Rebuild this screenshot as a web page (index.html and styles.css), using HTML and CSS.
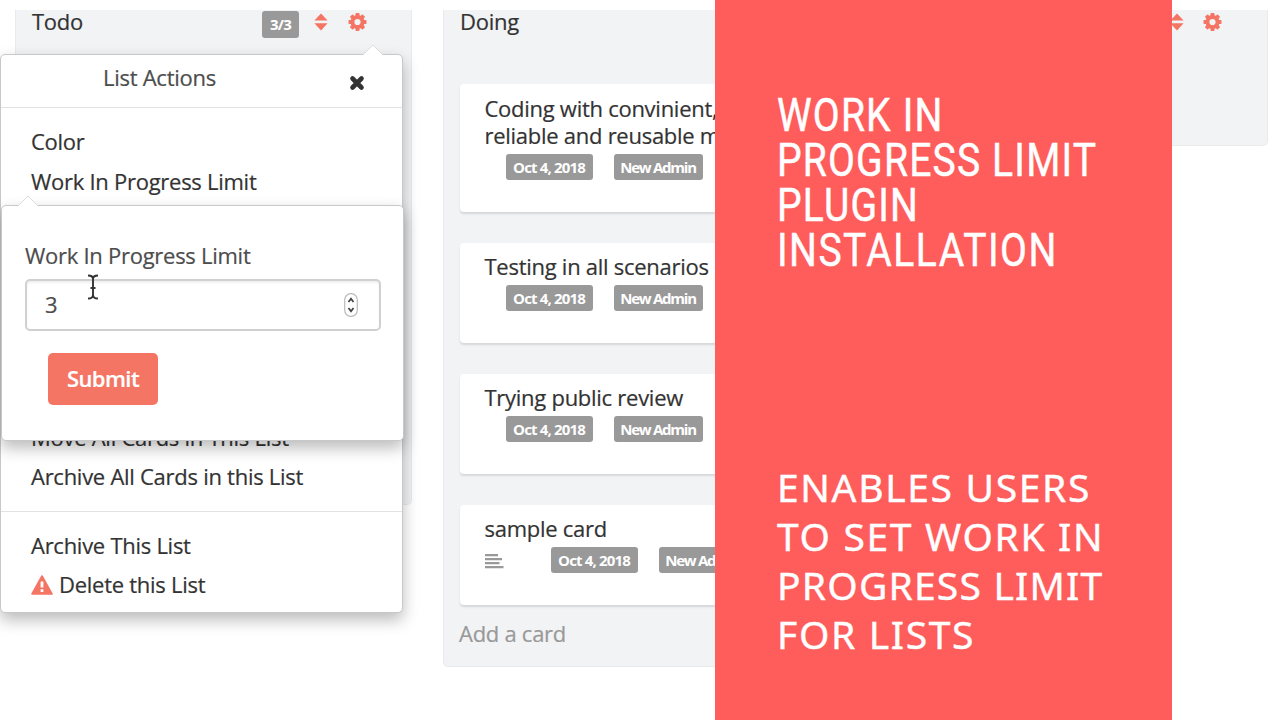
FILE: index.html
```html
<!DOCTYPE html>
<html lang="en">
<head>
<meta charset="utf-8">
<title>Work In Progress Limit</title>
<link rel="stylesheet" href="styles.css">
</head>
<body>
<svg width="0" height="0" class="defs">
  <symbol id="gear" viewBox="0 0 18 18">
    <g fill="currentColor"><rect x="7" y="0" width="4" height="18" rx=".8"/><rect x="7" y="0" width="4" height="18" rx=".8" transform="rotate(45 9 9)"/><rect x="7" y="0" width="4" height="18" rx=".8" transform="rotate(90 9 9)"/><rect x="7" y="0" width="4" height="18" rx=".8" transform="rotate(135 9 9)"/><circle cx="9" cy="9" r="7"/></g>
    <circle cx="9" cy="9" r="3.1" fill="#f2f3f5"/>
  </symbol>
  <symbol id="sort" viewBox="0 0 14 18"><path fill="currentColor" d="M7 .6 13.6 7.500H.4zM7 17.400 13.600 10.300H.4z"/></symbol>
</svg>
<main class="board">
  <section class="list todo">
    <header class="list-head"><h2>Todo</h2><span class="count">3/3</span><svg class="sort"><use href="#sort"/></svg><svg class="gear"><use href="#gear"/></svg></header>
  </section>
  <section class="list doing">
    <header class="list-head"><h2>Doing</h2></header>
    <div class="cards">
      <article class="card"><p>Coding with convinient,</p><p>reliable and reusable m</p><div class="tags"><span class="date">Oct 4, 2018</span><span class="user">New Admin</span></div></article>
      <article class="card"><p>Testing in all scenarios</p><div class="tags"><span class="date">Oct 4, 2018</span><span class="user">New Admin</span></div></article>
      <article class="card"><p>Trying public review</p><div class="tags"><span class="date">Oct 4, 2018</span><span class="user">New Admin</span></div></article>
      <article class="card"><p>sample card</p><div class="tags described"><svg class="lines" viewBox="0 0 19 15"><path d="M0 1.200h13M0 5.200h17M0 9.200h14.500M0 13.200h18.500" stroke="#999" stroke-width="2.200"/></svg><span class="date">Oct 4, 2018</span><span class="user">New Admin</span></div></article>
    </div>
    <p class="add">Add a card</p>
  </section>
  <section class="list done">
    <header class="list-head"><svg class="sort"><use href="#sort"/></svg><svg class="gear"><use href="#gear"/></svg></header>
  </section>
</main>

<div class="popover actions">
  <svg class="arrow" viewBox="0 0 20 12"><path d="M0 11 10 1 20 11V12H0z" fill="#fff"/><path d="M0 11 10 1 20 11" fill="none" stroke="#dcdcde"/></svg>
  <header class="pop-head"><span>List Actions</span><svg class="close" viewBox="0 0 16 16"><path d="M3.500 3.500 12.500 12.500M12.500 3.500 3.500 12.500" stroke="#333" stroke-width="4.600" stroke-linecap="round"/></svg></header>
  <ul class="group"><li>Color</li><li>Work In Progress Limit</li></ul>
  <ul class="group covered"></ul>
  <ul class="group"><li>Move All Cards in This List</li><li>Archive All Cards in this List</li></ul>
  <ul class="group"><li>Archive This List</li><li class="delete"><svg viewBox="0 0 22 20"><path d="M11 1 21 19H1z" fill="#f47564" stroke="#f47564" stroke-width="1.600" stroke-linejoin="round"/><path d="M11 6.500v6M11 14.300v2.600" stroke="#fff" stroke-width="2.800"/></svg>Delete this List</li></ul>
</div>

<form class="popover limit">
  <svg class="arrow" viewBox="0 0 20 12"><path d="M0 11 10 1 20 11V12H0z" fill="#fff"/><path d="M0 11 10 1 20 11" fill="none" stroke="#dcdcde"/></svg>
  <label>Work In Progress Limit</label>
  <div class="field"><span>3</span><svg viewBox="0 0 14 24"><rect x=".7" y=".7" width="12.600" height="22.600" rx="6" fill="#fff" stroke="#bbb" stroke-width="1.200"/><path d="M4.500 9 7 5.800 9.500 9M4.500 15 7 18.200 9.500 15" fill="none" stroke="#444" stroke-width="1.800"/></svg></div>
  <button type="button">Submit</button>
</form>

<svg class="cursor" viewBox="0 0 12 26"><path d="M1 1.500Q6 1.500 6 5V21Q6 24.500 1 24.500M11 1.500Q6 1.500 6 5M6 21Q6 24.500 11 24.500M3.500 14h5" fill="none" stroke="#333" stroke-width="1.900"/></svg>

<aside class="banner">
  <h1><span>WORK IN</span><span>PROGRESS LIMIT</span><span>PLUGIN</span><span class="wide">INSTALLATION</span></h1>
  <p><span>ENABLES USERS</span><span>TO SET WORK IN</span><span class="tight">PROGRESS LIMIT</span><span>FOR LISTS</span></p>
</aside>
</body>
</html>
```
FILE: styles.css
```css
* { box-sizing: border-box; margin: 0; padding: 0; }
body { width: 1280px; height: 720px; overflow: hidden; position: relative; background: #fff; font: 22px/27.5px "Open Sans", sans-serif; letter-spacing: -.27px; color: #333; -webkit-text-stroke: .2px; }
.defs { position: absolute; }
.board { display: flex; align-items: flex-start; gap: 31px; padding: 10px 0 0 15px; }
.list { flex: none; width: 397px; background: #f2f3f5; border: 1px solid #e9eaec; border-top: 0; border-radius: 0 0 5px 5px; }
.todo { height: 495px; }
.doing { height: 656.5px; }
.done { height: 136px; }
.list-head { display: flex; align-items: flex-start; height: 74px; padding: 3px 44px 0 16px; color: #f47564; }
.list-head h2 { font-size: 22px; font-weight: 400; line-height: 18px; margin-top: -1px; color: #333; }
.count, .tags span { background: #999; color: #fff; border-radius: 3px; font-size: 15px; font-weight: 700; text-align: center; letter-spacing: -.85px; line-height: 26px; height: 26px; white-space: nowrap; -webkit-text-stroke: 0; }
.tags .user { letter-spacing: -1.25px; }
.count { margin-left: auto; margin-top: -2px; width: 37px; height: 27px; line-height: 27px; }
.sort { width: 14px; height: 18px; margin-left: 15px; }
.done .sort { margin-left: auto; }
.gear { width: 19px; height: 18px; margin-left: 20px; }
.done .gear { margin-left: 19px; margin-right: 1px; }
.cards { display: flex; flex-direction: column; gap: 30.5px; padding: 0 16px; }
.card { background: #fff; border-radius: 4px; padding: 11px 0 32px 24.5px; box-shadow: 0 2px 2px #d5d7da; white-space: nowrap; }
.card p { width: max-content; position: relative; top: -.5px; }
.tags { display: flex; gap: 21px; height: 30px; padding: 4px 0 0 21px; }
.tags .date { width: 87px; }
.tags .user { width: 89px; }
.described { padding-left: 0; }
.lines { width: 19px; height: 15px; margin: 7px 26px 0 0; }
.add { color: #999; padding: 14.5px 0 0 15px; }

.popover { position: absolute; background: #fff; border: 1px solid #c8c8ca; border-radius: 5px; box-shadow: 0 7px 16px rgba(0,0,0,.27); }
.arrow { position: absolute; width: 20px; height: 12px; top: -11px; }
.actions { left: 0; top: 54px; width: 403px; height: 559px; }
.actions .arrow { left: 362px; }
.pop-head { display: flex; height: 53px; padding: 9px 37px 0 102px; border-bottom: 1px solid #e2e2e2; color: #4d4d4d; }
.close { width: 16px; height: 16px; margin: 11px 0 0 auto; }
.group { list-style: none; padding: 14px 0 14px 30px; }
.group + .group { border-top: 1px solid #e2e2e2; }
.group li { line-height: 39.6px; height: 39.6px; white-space: nowrap; }
.covered { height: 187.5px; }
.delete { display: flex; align-items: center; gap: 6px; }
.delete svg { width: 22px; height: 20px; }
.limit { left: 1px; top: 205px; width: 403px; height: 236px; padding: 36px 23px 0 23px; }
.limit .arrow { left: 16px; }
.limit label { display: block; color: #4d4d4d; }
.field { display: flex; align-items: center; justify-content: space-between; width: 356px; height: 52px; margin-top: 9px; padding: 1px 21px 0 18px; border: 2px solid #d0d0d0; border-radius: 5px; box-shadow: inset 0 2px 2px #f0f0f0; color: #4d4d4d; }
.field svg { width: 14px; height: 24px; }
button { display: block; width: 110px; height: 52px; margin: 22px 0 0 23px; padding-bottom: 2px; border: 0; border-radius: 5px; background: #f47564; color: #fff; font: 600 22px "Open Sans", sans-serif; letter-spacing: -.6px; }
.cursor { position: absolute; left: 87px; top: 274px; width: 12px; height: 26px; }

.banner { position: absolute; left: 715px; top: 0; width: 457px; height: 720px; background: #ff5c5c; color: #fff; padding: 93px 0 0 62px; }
.banner span { display: block; width: max-content; white-space: nowrap; transform-origin: left; }
.banner h1 { font: 400 46.5px/45px Roboto, sans-serif; letter-spacing: 1.4px; height: 369px; -webkit-text-stroke: .5px; }
.banner h1 span { transform: scaleX(.84); }
.banner h1 .wide { letter-spacing: 1.75px; }
.banner p { font: 400 39px/49px "Noto Sans", sans-serif; letter-spacing: 1.65px; -webkit-text-stroke: .4px; }
.banner p .tight { letter-spacing: 1.2px; }
```
